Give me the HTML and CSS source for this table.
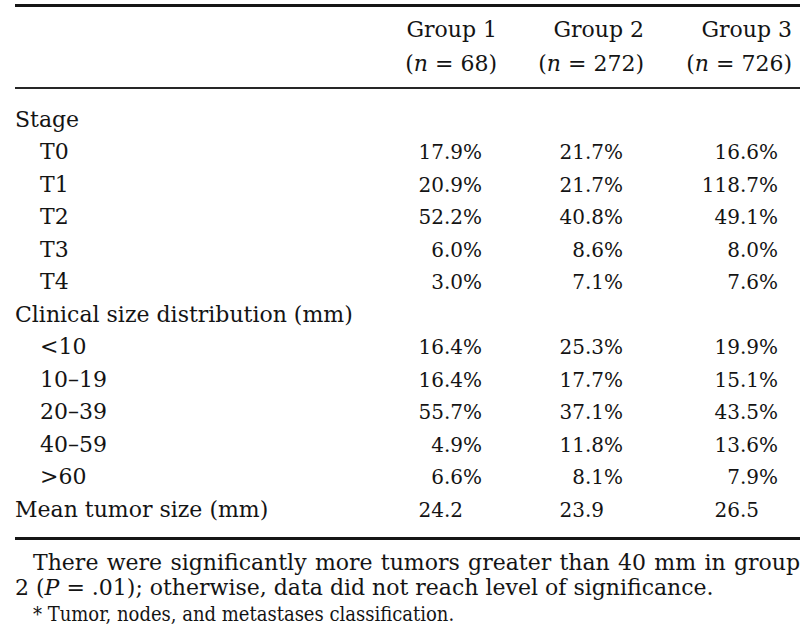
FILE: index.html
```html
<!DOCTYPE html>
<html lang="en">
<head>
<meta charset="utf-8">
<title>Tumor stage and size by group</title>
<link rel="stylesheet" href="styles.css">
</head>
<body>
<div class="page">
  <div class="tbl">
    <div class="head">
      <div class="row hrow">
        <div class="lab"></div>
        <div class="hc c1">Group 1</div>
        <div class="hc c2">Group 2</div>
        <div class="hc c3">Group 3</div>
      </div>
      <div class="row hrow">
        <div class="lab"></div>
        <div class="hc c1">(<i>n</i> = 68)</div>
        <div class="hc c2">(<i>n</i> = 272)</div>
        <div class="hc c3">(<i>n</i> = 726)</div>
      </div>
    </div>
    <div class="body">
      <div class="row"><div class="lab">Stage</div><div></div><div></div><div></div></div>
      <div class="row"><div class="lab sub">T0</div><div class="dc c1">17.9%</div><div class="dc c2">21.7%</div><div class="dc c3">16.6%</div></div>
      <div class="row"><div class="lab sub">T1</div><div class="dc c1">20.9%</div><div class="dc c2">21.7%</div><div class="dc c3">118.7%</div></div>
      <div class="row"><div class="lab sub">T2</div><div class="dc c1">52.2%</div><div class="dc c2">40.8%</div><div class="dc c3">49.1%</div></div>
      <div class="row"><div class="lab sub">T3</div><div class="dc c1">6.0%</div><div class="dc c2">8.6%</div><div class="dc c3">8.0%</div></div>
      <div class="row"><div class="lab sub">T4</div><div class="dc c1">3.0%</div><div class="dc c2">7.1%</div><div class="dc c3">7.6%</div></div>
      <div class="row"><div class="lab">Clinical size distribution (mm)</div><div></div><div></div><div></div></div>
      <div class="row"><div class="lab sub">&lt;10</div><div class="dc c1">16.4%</div><div class="dc c2">25.3%</div><div class="dc c3">19.9%</div></div>
      <div class="row"><div class="lab sub">10–19</div><div class="dc c1">16.4%</div><div class="dc c2">17.7%</div><div class="dc c3">15.1%</div></div>
      <div class="row"><div class="lab sub">20–39</div><div class="dc c1">55.7%</div><div class="dc c2">37.1%</div><div class="dc c3">43.5%</div></div>
      <div class="row"><div class="lab sub">40–59</div><div class="dc c1">4.9%</div><div class="dc c2">11.8%</div><div class="dc c3">13.6%</div></div>
      <div class="row"><div class="lab sub">&gt;60</div><div class="dc c1">6.6%</div><div class="dc c2">8.1%</div><div class="dc c3">7.9%</div></div>
      <div class="row"><div class="lab">Mean tumor size (mm)</div><div class="dc c1">24.2<span class="ghost">%</span></div><div class="dc c2">23.9<span class="ghost">%</span></div><div class="dc c3">26.5<span class="ghost">%</span></div></div>
    </div>
  </div>
  <div class="notes">
    <p class="note"><span class="l1">There were significantly more tumors greater than 40 mm in group</span><span class="l2">2 (<i>P</i> = .01); otherwise, data did not reach level of significance.</span></p>
    <p class="foot">* Tumor, nodes, and metastases classification.</p>
  </div>
</div>
</body>
</html>
```

FILE: styles.css
```css
html, body {
  margin: 0;
  padding: 0;
  background: #ffffff;
}

body {
  font-family: "DejaVu Serif", "Liberation Serif", serif;
  font-size: 22px;
  color: #141414;
}

.page {
  padding: 4px 10px 0 15px;
  width: 785px;
}

.tbl {
  border-top: 3px solid #161616;
  border-bottom: 3px solid #161616;
}

.head {
  padding: 6px 0 6px;
  border-bottom: 2px solid #262626;
}

.body {
  padding: 14.5px 0 11px;
}

.row {
  display: grid;
  grid-template-columns: 375px 110px 150px 150px;
  height: 32.5px;
  line-height: 32.5px;
  white-space: nowrap;
}

.hrow {
  height: 34px;
  line-height: 34px;
}

.lab.sub {
  padding-left: 25px;
}

.hc, .dc {
  text-align: right;
}

.dc {
  font-size: 20px;
}

.hc.c1 { padding-right: 3px; }
.hc.c2 { padding-right: 6px; }
.hc.c3 { padding-right: 8px; }

.dc.c1 { padding-right: 18px; }
.dc.c2 { padding-right: 27px; }
.dc.c3 { padding-right: 22px; }

.ghost {
  visibility: hidden;
}

.notes {
  padding-top: 9.5px;
  line-height: 25.5px;
}

.note, .foot {
  margin: 0;
}

.l1 {
  display: block;
  padding-left: 18px;
  text-align: justify;
  text-align-last: justify;
}

.l2 {
  display: block;
}

.foot {
  padding-left: 18px;
  font-family: "DejaVu Serif Condensed", "DejaVu Serif", serif;
  font-stretch: condensed;
  font-size: 20px;
  line-height: 27px;
}
```
